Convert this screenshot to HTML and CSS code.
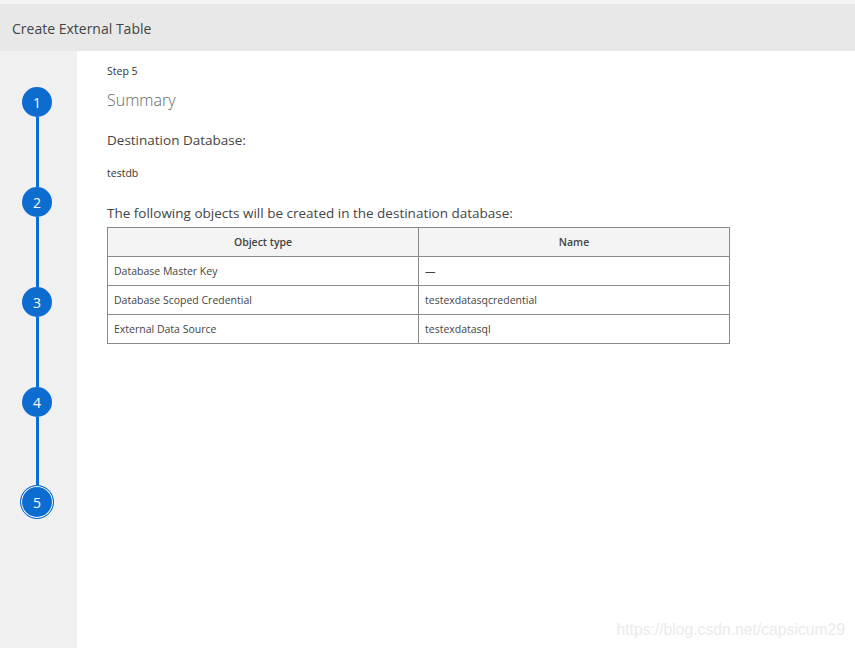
FILE: index.html
```html
<!DOCTYPE html>
<html>
<head>
<meta charset="utf-8">
<link rel="stylesheet" href="styles.css">
</head>
<body>
<div class="page">
  <div class="header">Create External Table</div>
  <div class="main">
    <div class="sidebar">
      <div class="steps">
        <div class="step">1</div>
        <div class="line"></div>
        <div class="step">2</div>
        <div class="line"></div>
        <div class="step">3</div>
        <div class="line"></div>
        <div class="step">4</div>
        <div class="line"></div>
        <div class="step current">5</div>
      </div>
    </div>
    <div class="content">
      <div class="step-label">Step 5</div>
      <div class="title">Summary</div>
      <div class="section">Destination Database:</div>
      <div class="value">testdb</div>
      <div class="section objects">The following objects will be created in the destination database:</div>
      <table class="grid">
        <thead>
          <tr><th>Object type</th><th>Name</th></tr>
        </thead>
        <tbody>
          <tr><td>Database Master Key</td><td>—</td></tr>
          <tr><td>Database Scoped Credential</td><td>testexdatasqcredential</td></tr>
          <tr><td>External Data Source</td><td>testexdatasql</td></tr>
        </tbody>
      </table>
    </div>
  </div>
  <div class="watermark">https://blog.csdn.net/capsicum29</div>
</div>
</body>
</html>
```
FILE: styles.css
```css
html, body {
  margin: 0;
  padding: 0;
  height: 100%;
}
body {
  font-family: "Open Sans", "Noto Sans", sans-serif;
  background: #f3f3f3;
  color: #333;
}
.page {
  position: relative;
  height: 648px;
  display: flex;
  flex-direction: column;
  padding-top: 4px;
  box-sizing: border-box;
  overflow: hidden;
}
.header {
  height: 47px;
  background: #e8e8e8;
  font-size: 14px;
  color: #444;
  padding: 2px 0 0 12px;
  box-sizing: border-box;
  display: flex;
  align-items: center;
  flex: none;
}
.main {
  flex: 1;
  display: flex;
}
.sidebar {
  width: 77px;
  background: #f0f0f0;
  flex: none;
  display: flex;
}
.steps {
  width: 34px;
  margin-left: 20px;
  display: flex;
  flex-direction: column;
  align-items: center;
  padding-top: 36px;
}
.step {
  width: 30px;
  height: 30px;
  border-radius: 50%;
  background: #0c6cd0;
  color: #fff;
  font-size: 14px;
  display: flex;
  align-items: center;
  justify-content: center;
  box-sizing: border-box;
  flex: none;
}
.step.current {
  width: 34px;
  height: 34px;
  border: 1px solid #0c6cd0;
  box-shadow: inset 0 0 0 1px #fff;
}
.line {
  width: 3px;
  height: 70px;
  background: #0c6cd0;
  flex: none;
}
.line:nth-last-child(2) {
  height: 68px;
}
.content {
  flex: 1;
  background: #fff;
  padding: 12px 0 0 30px;
}
.step-label {
  font-size: 10.5px;
  color: #333;
  line-height: 16px;
}
.title {
  font-size: 16px;
  font-weight: 300;
  color: #666;
  margin-top: 10px;
  line-height: 22px;
}
.section {
  font-size: 13.5px;
  color: #444;
  margin-top: 19px;
  line-height: 20px;
}
.value {
  font-size: 10.5px;
  color: #333;
  margin-top: 15px;
  line-height: 16px;
}
.section.objects {
  margin-top: 22px;
}
.grid {
  border-collapse: collapse;
  width: 623px;
  margin-top: 4px;
  font-size: 10.5px;
  color: #444;
}
.grid th, .grid td {
  border: 1px solid #8a8a8a;
  height: 29px;
  padding: 0 6px;
  box-sizing: border-box;
  width: 50%;
}
.grid th {
  background: #f4f4f4;
  font-weight: 600;
  text-align: center;
}
.grid td {
  text-align: left;
}
.watermark {
  position: absolute;
  right: 10px;
  bottom: 9px;
  font-family: "Liberation Sans", Arial, sans-serif;
  font-size: 15.7px;
  color: #ebebeb;
}
```
